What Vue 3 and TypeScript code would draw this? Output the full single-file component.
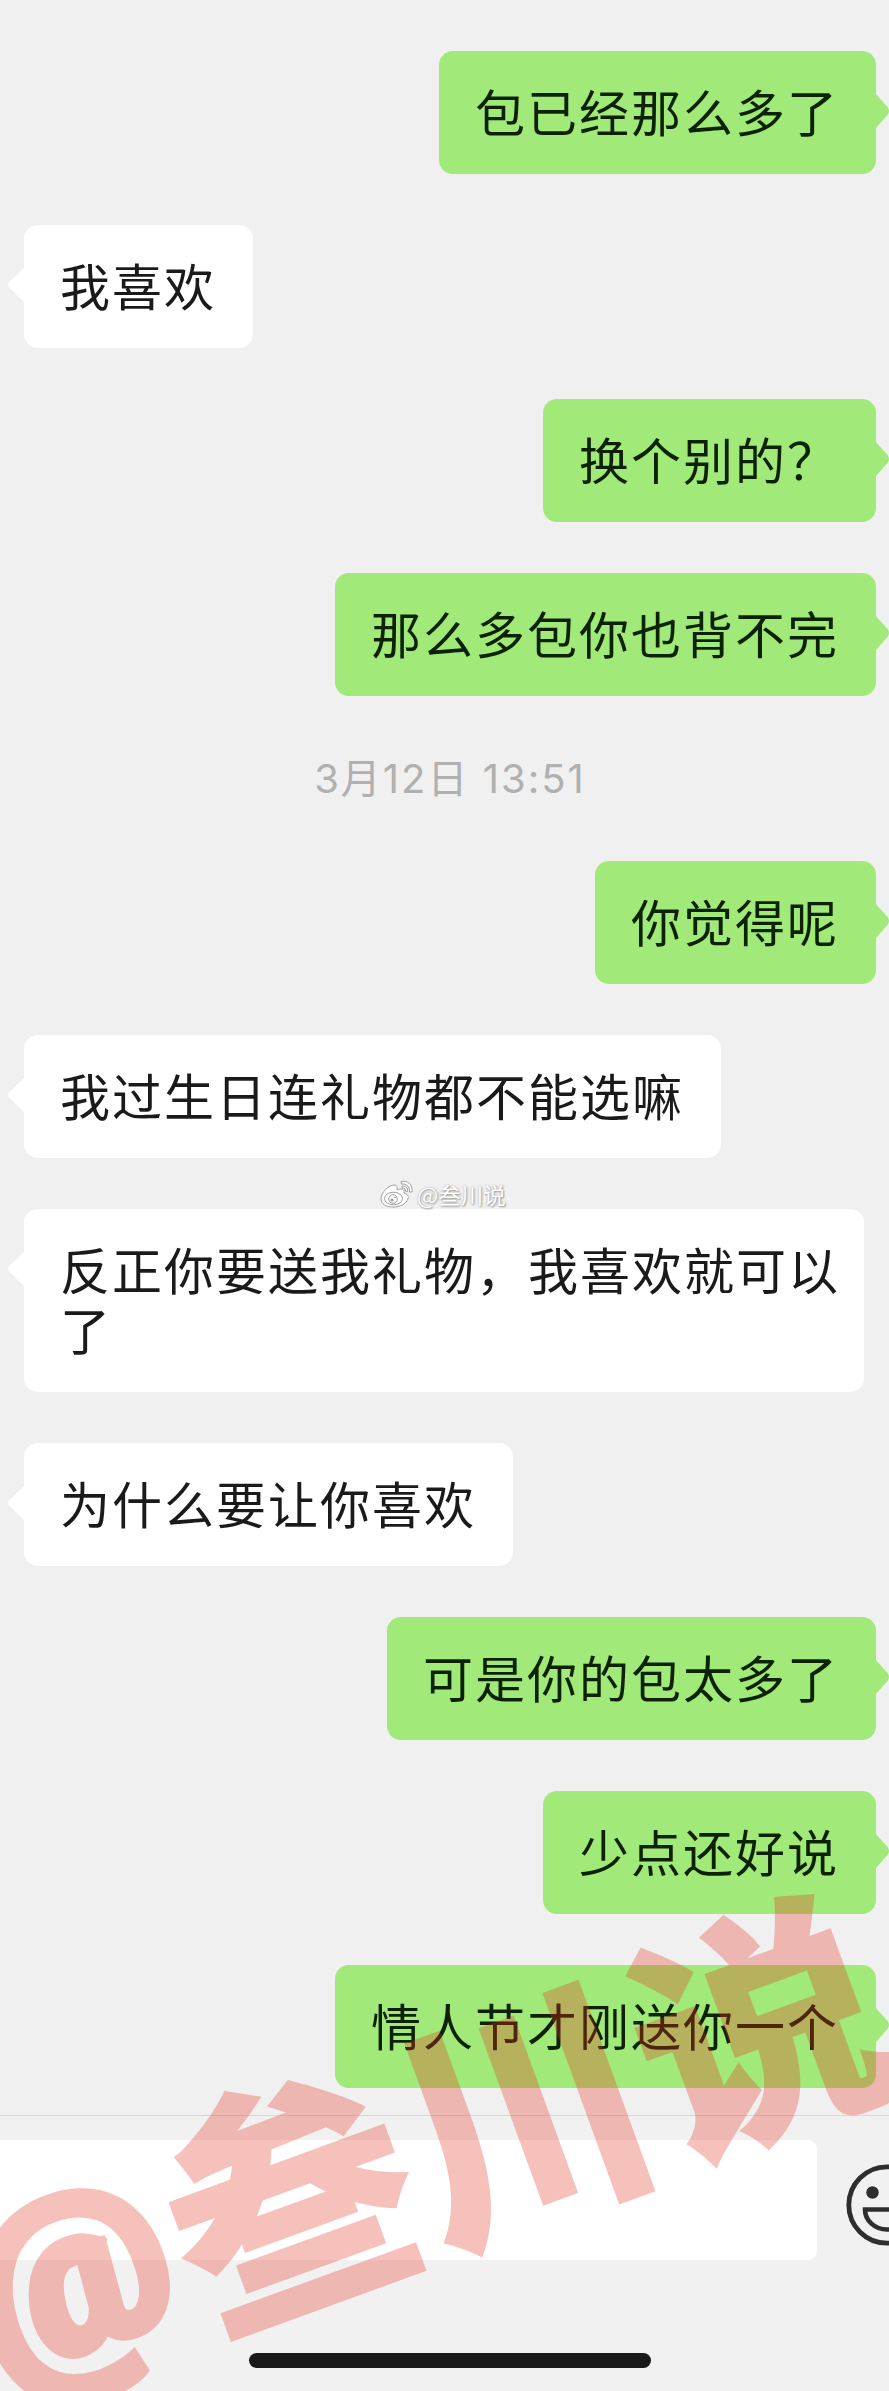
<script setup lang="ts">
interface Entry {
  kind: 'in' | 'out' | 'time'
  text: string
}

const entries: Entry[] = [
  { kind: 'out', text: '包已经那么多了' },
  { kind: 'in', text: '我喜欢' },
  { kind: 'out', text: '换个别的？' },
  { kind: 'out', text: '那么多包你也背不完' },
  { kind: 'time', text: '3月12日 13:51' },
  { kind: 'out', text: '你觉得呢' },
  { kind: 'in', text: '我过生日连礼物都不能选嘛' },
  { kind: 'in', text: '反正你要送我礼物，我喜欢就可以了' },
  { kind: 'in', text: '为什么要让你喜欢' },
  { kind: 'out', text: '可是你的包太多了' },
  { kind: 'out', text: '少点还好说' },
  { kind: 'out', text: '情人节才刚送你一个' },
]

// Messages longer than one line use a tighter right inset
const LINE_CHARS = 15
</script>

<template>
  <main class="screen">
    <section class="chat">
      <div
        v-for="(e, i) in entries"
        :key="i"
        class="row"
        :class="[e.kind, { wide: e.text.length > LINE_CHARS }]"
      >
        <time v-if="e.kind === 'time'" class="stamp">{{ e.text }}</time>
        <div v-else class="bubble">
          <svg v-if="e.kind === 'out'" class="tail" width="14" height="38" viewBox="0 0 14 38">
            <path d="M0 1 L12.5 15 Q15.5 19 12.5 23 L0 37 Z" />
          </svg>
          <svg v-else class="tail" width="18" height="38" viewBox="0 0 18 38">
            <path d="M18 1 L2.5 16 Q0 19 2.5 22 L18 37 Z" />
          </svg>
          <span class="text">{{ e.text }}</span>
        </div>
      </div>
    </section>

    <footer class="bar">
      <div class="compose">
        <div class="input"></div>
        <svg class="emoji" width="82" height="82" viewBox="0 0 82 82">
          <circle cx="41" cy="41" r="38.2" fill="none" stroke="#2e2e2e" stroke-width="4.8" />
          <circle cx="26.5" cy="28.5" r="6.2" fill="#2e2e2e" />
          <circle cx="55.5" cy="28.5" r="6.2" fill="#2e2e2e" />
          <path d="M19 45.5 H63 A22 20 0 0 1 19 45.5 Z" fill="none" stroke="#2e2e2e" stroke-width="4.6" />
        </svg>
      </div>
      <div class="home"></div>
    </footer>

    <div class="credit">
      <svg width="34" height="28" viewBox="0 0 34 28">
        <g fill="#fff" stroke="#a0a0a0" stroke-width="1">
          <path d="M1 19 C1 12 9 5 14 5 C18 5 17 9 17 10 C21 8 25 9 24 13 C28 14 29 17 28 19 C26 24 20 27 13 27 C6 27 1 24 1 19 Z" />
          <ellipse cx="13.500" cy="18.500" rx="9" ry="6.300" />
          <circle cx="13" cy="19" r="4.300" />
          <path d="M21 1.500 C28 0 33 5 32 12 L29.500 12 C30 7 27 3.500 21.500 4 Z" />
          <path d="M22 6.200 C26 5.500 28 8 27.500 11.500 L25.500 11.300 C25.500 9 24.500 8 22.300 8.200 Z" />
        </g>
        <circle cx="12" cy="20" r="1.500" fill="#999" />
        <circle cx="15" cy="17.500" r=".8" fill="#999" />
      </svg>
      <span>@叁川说</span>
    </div>

    <svg class="watermark" width="889" height="2391" viewBox="0 0 889 2391">
      <text class="at" transform="translate(1 2380) rotate(-20)">@</text>
      <text transform="translate(204 2331) rotate(-20)">叁川说</text>
    </svg>
  </main>
</template>

<style>
body {
  background: #f0f0f0;
}
</style>

<style scoped>
.screen {
  position: relative;
  display: flex;
  flex-direction: column;
  width: 889px;
  height: 2391px;
  overflow: hidden;
  background: #f0f0f0;
  font-family: 'Noto Sans CJK SC', sans-serif;
}
.chat {
  display: flex;
  flex-direction: column;
  gap: 51px;
  padding: 51px 13px 27px 24px;
}
.row {
  display: flex;
}
.out {
  justify-content: flex-end;
}
.time {
  height: 63px;
  align-items: center;
  justify-content: center;
}
.stamp {
  font-family: Inter, 'Noto Sans CJK SC', sans-serif;
  font-size: 40px;
  line-height: 63px;
  color: #b0b0b0;
  letter-spacing: 2px;
}
.bubble {
  position: relative;
  box-sizing: border-box;
  max-width: 840px;
  padding: 29px 37px 34px 36px;
  border-radius: 14px;
  background: #fff;
  color: #1a1a1a;
}
.out .bubble {
  background: #a1e978;
  color: #0d2105;
}
.wide .bubble {
  padding-right: 20px;
}
.text {
  display: block;
  font-size: 50px;
  line-height: 60px;
  letter-spacing: 2px;
}
.tail {
  position: absolute;
  top: 41px;
  left: -17px;
  fill: #fff;
}
.out .tail {
  left: auto;
  right: -13px;
  fill: #a1e978;
}
.bar {
  display: flex;
  flex: 1;
  flex-direction: column;
  align-items: center;
  border-top: 1px solid #d6d8d6;
  background: #f1f1f1;
}
.compose {
  display: flex;
  gap: 29px;
  width: 889px;
  padding-top: 24px;
}
.input {
  flex: none;
  width: 817px;
  height: 120px;
  border-radius: 0 9px 9px 0;
  background: #fff;
}
.emoji {
  flex: none;
  margin-top: 24px;
}
.home {
  width: 402px;
  height: 15px;
  margin: 93px 0 0 11px;
  border-radius: 8px;
  background: #191919;
}
.credit {
  position: absolute;
  left: 380px;
  top: 1180px;
  display: flex;
  gap: 3px;
  color: #fff;
  font-size: 22.5px;
  line-height: 28px;
  text-shadow: 1px 1px 2px #999, 0 0 2px #aaa;
}
.watermark {
  position: absolute;
  left: 0;
  top: 0;
  fill: #e83420;
  opacity: 0.3;
  font-size: 250px;
  font-weight: 900;
}
.at {
  font-family: Roboto, sans-serif;
  font-size: 223px;
  stroke: #e83420;
  stroke-width: 10px;
}
</style>
